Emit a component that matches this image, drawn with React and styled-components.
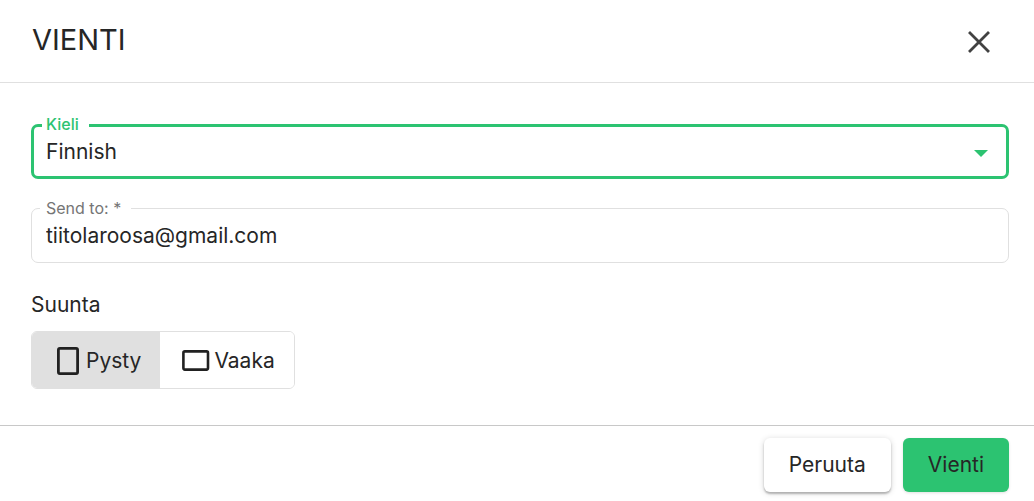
import React, { useState } from 'react';
import styled, { createGlobalStyle } from 'styled-components';

const GlobalStyle = createGlobalStyle`
  *, *::before, *::after {
    box-sizing: border-box;
  }

  body {
    margin: 0;
    background: #fff;
    color: #262626;
    font-family: Inter, "Liberation Sans", sans-serif;
    font-size: 21px;
    line-height: 24px;
  }

  button, input, select {
    font: inherit;
    color: inherit;
  }
`;

const Dialog = styled.form`
  display: flex;
  flex-direction: column;
`;

const Header = styled.header`
  display: flex;
  align-items: center;
  justify-content: space-between;
  padding: 22px 36px 20px 32px;
  border-bottom: 1px solid #e0e0e0;
`;

const Title = styled.h1`
  margin: 0 0 4px;
  font-size: 29px;
  font-weight: 400;
  line-height: 36px;
`;

const CloseButton = styled.button`
  display: flex;
  padding: 3px;
  border: 0;
  border-radius: 50%;
  background: none;
  color: #424242;
  cursor: pointer;
`;

const Content = styled.main`
  display: flex;
  flex-direction: column;
  gap: 29px;
  padding: 41px 25px 36px 31px;
`;

const Field = styled.div`
  position: relative;
  display: flex;
  align-items: center;
  height: 55px;
  border: ${({ $active }) => ($active ? '3px solid #2cc371' : '1px solid #e0e0e0')};
  border-radius: 7px;
`;

const FieldLabel = styled.label`
  position: absolute;
  top: ${({ $active }) => ($active ? '-13px' : '-11px')};
  left: 8px;
  padding: 0 10px 0 ${({ $active }) => ($active ? '4px' : '6px')};
  background: #fff;
  color: ${({ $active }) => ($active ? '#2cc371' : '#757575')};
  font-size: 16px;
  font-weight: ${({ $active }) => ($active ? 500 : 400)};
  line-height: 20px;
`;

const Select = styled.select`
  width: 100%;
  height: 100%;
  padding: 0 48px 0 12px;
  border: 0;
  outline: 0;
  border-radius: 4px;
  background: none;
  appearance: none;
`;

const Arrow = styled.svg`
  position: absolute;
  top: 23px;
  right: 18px;
  fill: #2cc371;
  pointer-events: none;
`;

const TextInput = styled.input`
  width: 100%;
  height: 100%;
  padding: 0 14px;
  border: 0;
  outline: 0;
  border-radius: 6px;
  background: none;
`;

const Orientation = styled.fieldset`
  min-width: 0;
  margin: 0;
  padding: 0;
  border: 0;
`;

const OrientationLabel = styled.legend`
  padding: 1px 0 14px;
`;

const ToggleGroup = styled.div`
  display: inline-flex;
  vertical-align: top;
  border: 1px solid #e0e0e0;
  border-radius: 6px;
  overflow: hidden;
`;

const ToggleButton = styled.button`
  display: flex;
  align-items: center;
  gap: 2px;
  height: 56px;
  padding: 2px 19px 0 20px;
  border: 0;
  background: ${({ $selected }) => ($selected ? '#e0e0e0' : '#fff')};
  cursor: pointer;
`;

const Footer = styled.footer`
  display: flex;
  justify-content: flex-end;
  gap: 12px;
  padding: 12px 25px 9px;
  border-top: 1px solid #c8c8c8;
`;

const ActionButton = styled.button`
  height: 54px;
  padding: 0 25px;
  border: 0;
  border-radius: 6px;
  background: ${({ $primary }) => ($primary ? '#2cc371' : '#fff')};
  box-shadow: ${({ $primary }) =>
    $primary
      ? '0 1px 3px rgba(0, 0, 0, 0.12)'
      : '0 2px 2px rgba(0, 0, 0, 0.24), 0 1px 6px rgba(0, 0, 0, 0.16)'};
  cursor: pointer;
`;

const PortraitIcon = () => (
  <svg width="32" height="32" viewBox="0 0 32 32" fill="none" aria-hidden="true">
    <rect x="6.4" y="3.4" width="19.2" height="25.2" rx="1.5" stroke="#212121" strokeWidth="2.8" />
  </svg>
);

const LandscapeIcon = () => (
  <svg width="32" height="32" viewBox="0 0 32 32" fill="none" aria-hidden="true">
    <rect x="3.4" y="6.4" width="24.6" height="18.2" rx="1.5" stroke="#212121" strokeWidth="2.6" />
  </svg>
);

const App = () => {
  const [language, setLanguage] = useState('fi');
  const [email, setEmail] = useState('tiitolaroosa@gmail.com');
  const [orientation, setOrientation] = useState('portrait');

  return (
    <>
      <GlobalStyle />
      <Dialog onSubmit={(e) => e.preventDefault()}>
        <Header>
          <Title>VIENTI</Title>
          <CloseButton type="button" aria-label="Sulje">
            <svg width="32" height="32" viewBox="0 0 32 32" aria-hidden="true">
              <path
                d="M7 7 25 25M25 7 7 25"
                stroke="currentColor"
                strokeWidth="2.8"
                strokeLinecap="square"
              />
            </svg>
          </CloseButton>
        </Header>
        <Content>
          <Field $active>
            <FieldLabel htmlFor="language" $active>Kieli</FieldLabel>
            <Select id="language" value={language} onChange={(e) => setLanguage(e.target.value)}>
              <option value="fi">Finnish</option>
              <option value="en">English</option>
            </Select>
            <Arrow width="14" height="7" viewBox="0 0 14 7" aria-hidden="true">
              <path d="M0 0h14L7 7z" />
            </Arrow>
          </Field>
          <Field>
            <FieldLabel htmlFor="email">Send to: *</FieldLabel>
            <TextInput
              id="email"
              type="email"
              required
              value={email}
              onChange={(e) => setEmail(e.target.value)}
            />
          </Field>
          <Orientation>
            <OrientationLabel>Suunta</OrientationLabel>
            <ToggleGroup>
              <ToggleButton
                type="button"
                aria-pressed={orientation === 'portrait'}
                $selected={orientation === 'portrait'}
                onClick={() => setOrientation('portrait')}
              >
                <PortraitIcon />
                Pysty
              </ToggleButton>
              <ToggleButton
                type="button"
                aria-pressed={orientation === 'landscape'}
                $selected={orientation === 'landscape'}
                onClick={() => setOrientation('landscape')}
              >
                <LandscapeIcon />
                Vaaka
              </ToggleButton>
            </ToggleGroup>
          </Orientation>
        </Content>
        <Footer>
          <ActionButton type="button">Peruuta</ActionButton>
          <ActionButton type="submit" $primary>Vienti</ActionButton>
        </Footer>
      </Dialog>
    </>
  );
};

export default App;
